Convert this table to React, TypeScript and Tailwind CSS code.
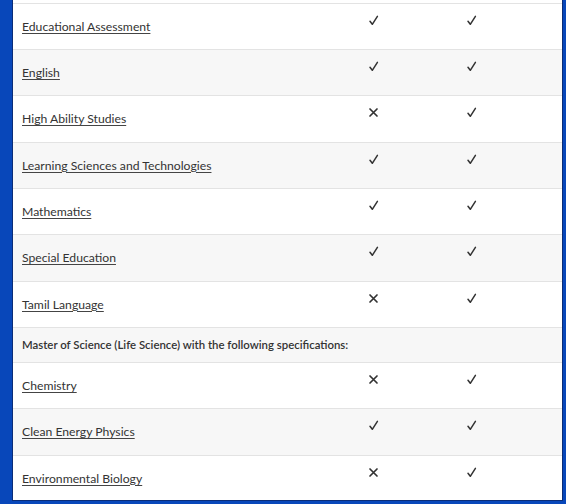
import React from "react";

type Row = { name: string; a: boolean; b: boolean };

const rowsA: Row[] = [
  { name: "Educational Assessment", a: true, b: true },
  { name: "English", a: true, b: true },
  { name: "High Ability Studies", a: false, b: true },
  { name: "Learning Sciences and Technologies", a: true, b: true },
  { name: "Mathematics", a: true, b: true },
  { name: "Special Education", a: true, b: true },
  { name: "Tamil Language", a: false, b: true },
];

const rowsB: Row[] = [
  { name: "Chemistry", a: false, b: true },
  { name: "Clean Energy Physics", a: true, b: true },
  { name: "Environmental Biology", a: false, b: true },
];

function Mark({ ok }: { ok: boolean }) {
  return (
    <div className="w-[98px] flex justify-center pt-[11px]">
      {ok ? (
        <svg width="11" height="11" viewBox="0 0 11 11">
          <path
            d="M2 6.3 L4.3 9.3 L9.4 1.3"
            fill="none"
            stroke="#333"
            strokeWidth="1.5"
            strokeLinecap="round"
            strokeLinejoin="round"
          />
        </svg>
      ) : (
        <svg width="11" height="11" viewBox="0 0 11 11">
          <path
            d="M2 2 L9 9 M9 2 L2 9"
            fill="none"
            stroke="#333"
            strokeWidth="1.7"
            strokeLinecap="round"
          />
        </svg>
      )}
    </div>
  );
}

function DataRow({ row, shaded }: { row: Row; shaded: boolean }) {
  return (
    <div
      className={`flex h-[46.33px] border-t border-[#e3e3e3] ${shaded ? "bg-[#f7f7f7]" : "bg-white"}`}
    >
      <div className="flex-1 pl-[9px] pt-[15px] text-[12px] leading-[16px]">
        <a
          href="#"
          className="block w-fit text-[12.2px] leading-[16px] text-[#333] underline underline-offset-[1.5px] decoration-[#444]"
        >
          {row.name}
        </a>
      </div>
      <Mark ok={row.a} />
      <Mark ok={row.b} />
      <div className="w-[42px]" />
    </div>
  );
}

export default function App() {
  return (
    <div
      className="w-[566px] h-[504px] bg-[#0847ba] pl-[12px] pr-[3px] pb-[3px] overflow-hidden"
      style={{ fontFamily: 'Lato, "Open Sans", sans-serif' }}
    >
      <div className="h-full bg-white border-l border-r border-b border-[#0a2d78] overflow-hidden">
        <div className="h-[2.67px] bg-white" />
        {rowsA.map((r, i) => (
          <DataRow key={r.name} row={r} shaded={i % 2 === 1} />
        ))}
        <div className="flex h-[35px] border-t border-[#e3e3e3] bg-[#f7f7f7] items-center pl-[9px]">
          <span className="text-[11.4px] leading-[16px] font-semibold text-[#333]">
            Master of Science (Life Science) with the following specifications:
          </span>
        </div>
        {rowsB.map((r, i) => (
          <DataRow key={r.name} row={r} shaded={i % 2 === 1} />
        ))}
      </div>
    </div>
  );
}
